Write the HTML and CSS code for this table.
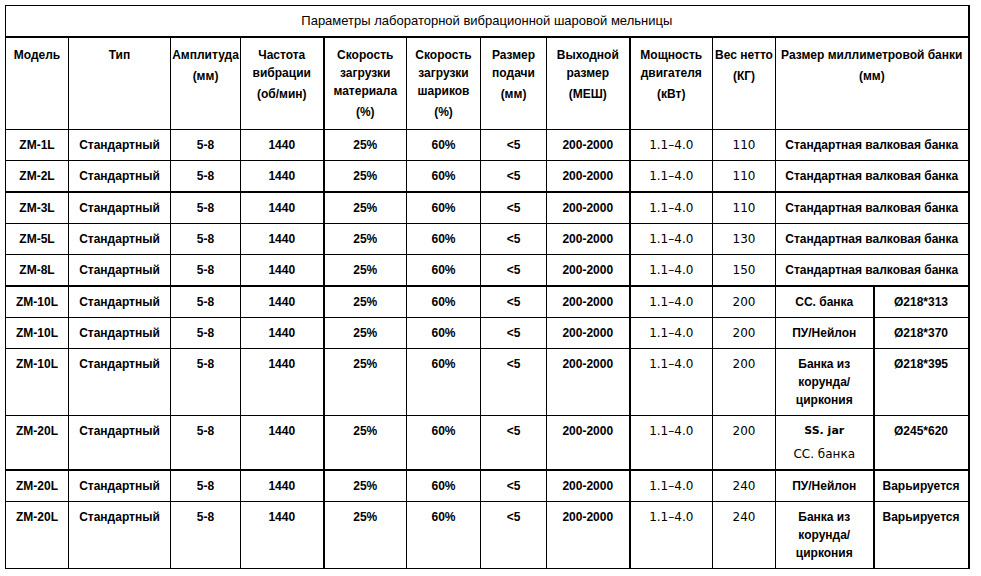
FILE: index.html
```html
<!DOCTYPE html>
<html lang="ru">
<head>
<meta charset="utf-8">
<title>Параметры лабораторной вибрационной шаровой мельницы</title>
<link rel="stylesheet" href="styles.css">
</head>
<body>
<table class="spec">
  <colgroup>
    <col class="c1"><col class="c2"><col class="c3"><col class="c4 thick">
    <col class="c5"><col class="c6"><col class="c7"><col class="c8 thick">
    <col class="c9"><col class="c10"><col class="c11 thick"><col class="c12 thick">
  </colgroup>
  <thead class="grp">
    <tr><th class="title" colspan="12">Параметры лабораторной вибрационной шаровой мельницы</th></tr>
  </thead>
  <tbody class="head">
    <tr>
      <th>Модель</th>
      <th>Тип</th>
      <th>Амплитуда<span class="u">(мм)</span></th>
      <th>Частота вибрации<span class="u">(об/мин)</span></th>
      <th>Скорость загрузки материала<span class="u">(%)</span></th>
      <th>Скорость загрузки шариков<span class="u">(%)</span></th>
      <th>Размер подачи<span class="u">(мм)</span></th>
      <th>Выходной размер<span class="u">(МЕШ)</span></th>
      <th>Мощность двигателя<span class="u">(кВт)</span></th>
      <th>Вес нетто<span class="u">(КГ)</span></th>
      <th colspan="2">Размер миллиметровой банки<span class="u">(мм)</span></th>
    </tr>
  </tbody>
  <tbody class="grp">
    <tr><td>ZM-1L</td><td>Стандартный</td><td>5-8</td><td>1440</td><td>25%</td><td>60%</td><td>&lt;5</td><td>200-2000</td><td class="n">1.1–4.0</td><td class="n">110</td><td colspan="2">Стандартная валковая банка</td></tr>
    <tr><td>ZM-2L</td><td>Стандартный</td><td>5-8</td><td>1440</td><td>25%</td><td>60%</td><td>&lt;5</td><td>200-2000</td><td class="n">1.1–4.0</td><td class="n">110</td><td colspan="2">Стандартная валковая банка</td></tr>
  </tbody>
  <tbody class="grp">
    <tr><td>ZM-3L</td><td>Стандартный</td><td>5-8</td><td>1440</td><td>25%</td><td>60%</td><td>&lt;5</td><td>200-2000</td><td class="n">1.1–4.0</td><td class="n">110</td><td colspan="2">Стандартная валковая банка</td></tr>
    <tr><td>ZM-5L</td><td>Стандартный</td><td>5-8</td><td>1440</td><td>25%</td><td>60%</td><td>&lt;5</td><td>200-2000</td><td class="n">1.1–4.0</td><td class="n">130</td><td colspan="2">Стандартная валковая банка</td></tr>
    <tr><td>ZM-8L</td><td>Стандартный</td><td>5-8</td><td>1440</td><td>25%</td><td>60%</td><td>&lt;5</td><td>200-2000</td><td class="n">1.1–4.0</td><td class="n">150</td><td colspan="2">Стандартная валковая банка</td></tr>
  </tbody>
  <tbody class="grp">
    <tr><td>ZM-10L</td><td>Стандартный</td><td>5-8</td><td>1440</td><td>25%</td><td>60%</td><td>&lt;5</td><td>200-2000</td><td class="n">1.1–4.0</td><td class="n">200</td><td>СС. банка</td><td>Ø218*313</td></tr>
    <tr><td>ZM-10L</td><td>Стандартный</td><td>5-8</td><td>1440</td><td>25%</td><td>60%</td><td>&lt;5</td><td>200-2000</td><td class="n">1.1–4.0</td><td class="n">200</td><td>ПУ/Нейлон</td><td>Ø218*370</td></tr>
    <tr><td>ZM-10L</td><td>Стандартный</td><td>5-8</td><td>1440</td><td>25%</td><td>60%</td><td>&lt;5</td><td>200-2000</td><td class="n">1.1–4.0</td><td class="n">200</td><td>Банка из корунда/ циркония</td><td>Ø218*395</td></tr>
    <tr><td>ZM-20L</td><td>Стандартный</td><td>5-8</td><td>1440</td><td>25%</td><td>60%</td><td>&lt;5</td><td>200-2000</td><td class="n">1.1–4.0</td><td class="n">200</td><td><span class="jar">SS. jar</span><span class="alt">СС. банка</span></td><td>Ø245*620</td></tr>
  </tbody>
  <tbody>
    <tr><td>ZM-20L</td><td>Стандартный</td><td>5-8</td><td>1440</td><td>25%</td><td>60%</td><td>&lt;5</td><td>200-2000</td><td class="n">1.1–4.0</td><td class="n">240</td><td>ПУ/Нейлон</td><td>Варьируется</td></tr>
    <tr><td>ZM-20L</td><td>Стандартный</td><td>5-8</td><td>1440</td><td>25%</td><td>60%</td><td>&lt;5</td><td>200-2000</td><td class="n">1.1–4.0</td><td class="n">240</td><td>Банка из корунда/ циркония</td><td>Варьируется</td></tr>
  </tbody>
</table>
</body>
</html>
```

FILE: styles.css
```css
html, body {
  margin: 0;
  padding: 0;
  background: #fff;
}

body {
  padding: 5px 0 0 5px;
  font-family: "Liberation Sans", Arial, sans-serif;
  color: #000;
}

.spec {
  border-collapse: collapse;
  table-layout: fixed;
  width: 964px;
  border: 1px solid #000;
  border-right-width: 2px;
}

.spec col.c1 { width: 63px; }
.spec col.c2 { width: 102px; }
.spec col.c3 { width: 70px; }
.spec col.c4 { width: 83px; }
.spec col.c5 { width: 83px; }
.spec col.c6 { width: 74px; }
.spec col.c7 { width: 66px; }
.spec col.c8 { width: 83px; }
.spec col.c9 { width: 83px; }
.spec col.c10 { width: 63px; }
.spec col.c11 { width: 98px; }
.spec col.c12 { width: 95px; }

.spec col.thick { border-right: 2px solid #000; }

.spec tbody.grp,
.spec thead.grp { border-bottom: 2px solid #000; }

.spec th,
.spec td {
  border: 1px solid #000;
  font-size: 12px;
  font-weight: bold;
  line-height: 18px;
  text-align: center;
  vertical-align: top;
  padding: 6px 1px 6px;
  overflow: hidden;
}

.spec th {
  padding-top: 8px;
  padding-bottom: 8px;
  height: 71px;
}

.spec th.title {
  font-size: 13px;
  font-weight: normal;
  height: auto;
  padding: 6px 0 6px;
  vertical-align: middle;
}

.spec .u {
  display: block;
  margin-top: 3px;
}

.spec td.n {
  font-family: "DejaVu Sans", Verdana, sans-serif;
  font-weight: normal;
}

.spec .jar {
  display: block;
  font-family: "DejaVu Sans", Verdana, sans-serif;
  font-size: 11px;
}

.spec .alt {
  display: block;
  margin-top: 5px;
  font-family: "DejaVu Sans", Verdana, sans-serif;
  font-weight: normal;
}
```
